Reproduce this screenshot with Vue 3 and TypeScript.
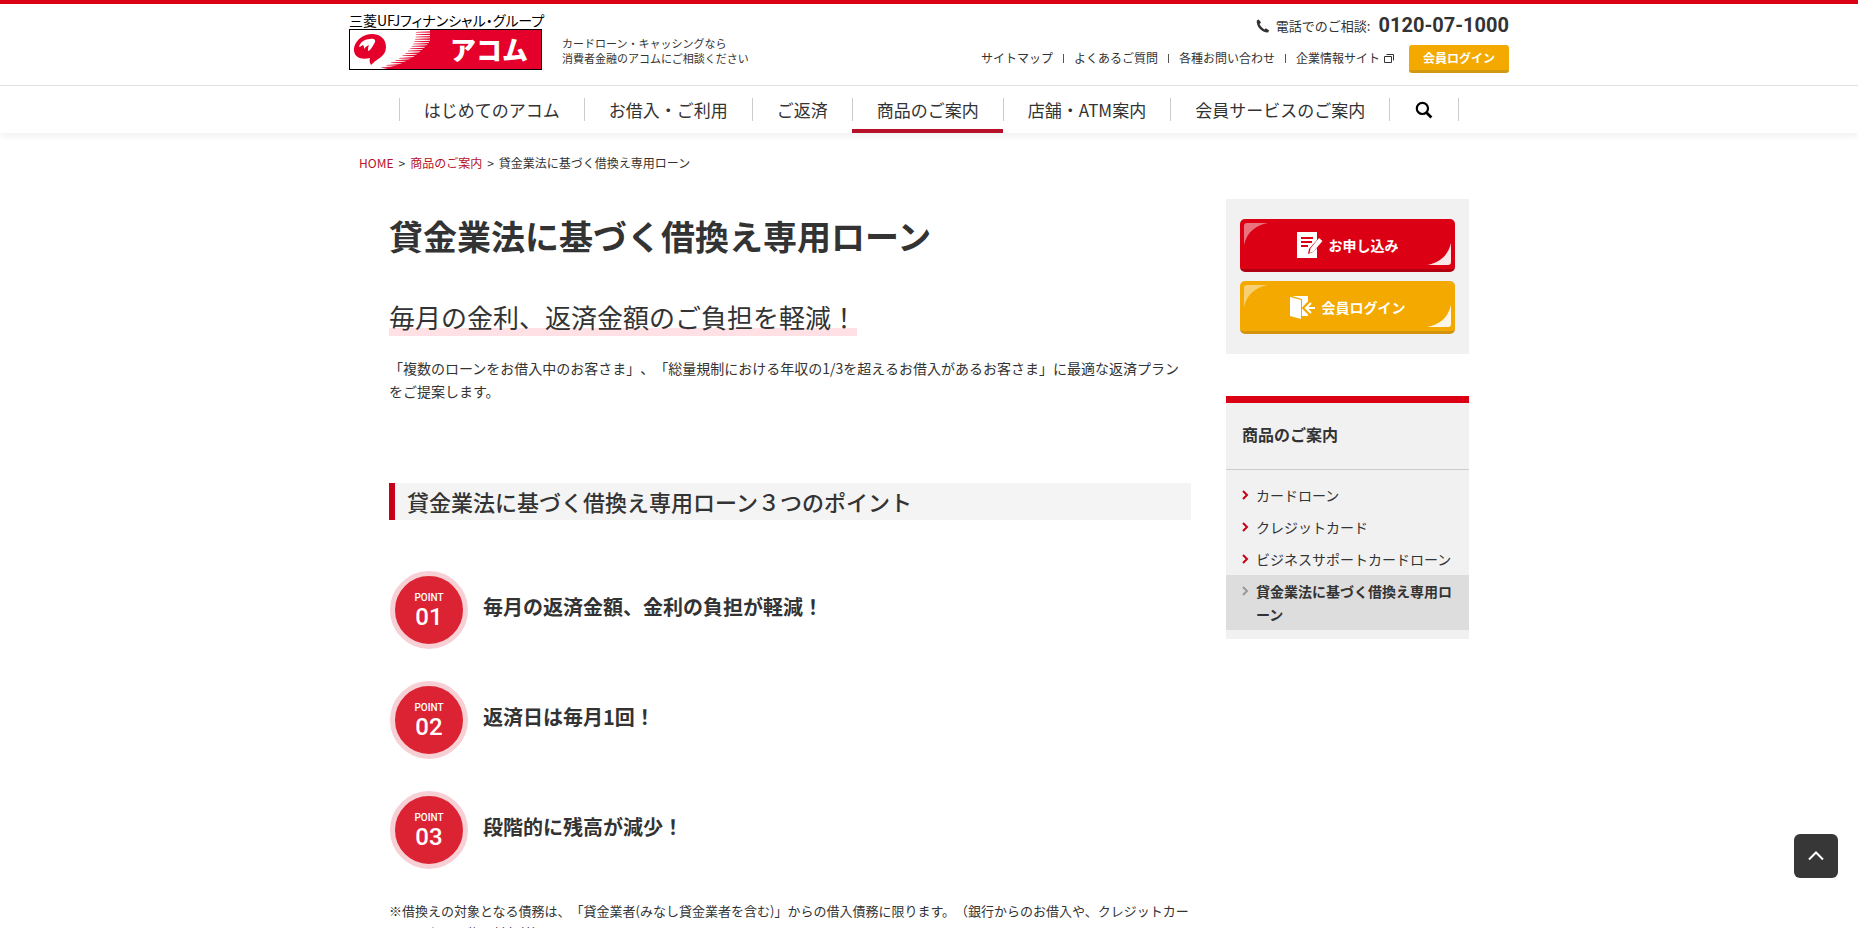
<script setup lang="ts">
interface NavItem {
  label: string
  active?: boolean
}

const utilityLinks: string[] = ['サイトマップ', 'よくあるご質問', '各種お問い合わせ']

const navItems: NavItem[] = [
  { label: 'はじめてのアコム' },
  { label: 'お借入・ご利用' },
  { label: 'ご返済' },
  { label: '商品のご案内', active: true },
  { label: '店舗・ATM案内' },
  { label: '会員サービスのご案内' },
]

const points: string[] = [
  '毎月の返済金額、金利の負担が軽減！',
  '返済日は毎月1回！',
  '段階的に残高が減少！',
]

const sideLinks: NavItem[] = [
  { label: 'カードローン' },
  { label: 'クレジットカード' },
  { label: 'ビジネスサポートカードローン' },
  { label: '貸金業法に基づく借換え専用ローン', active: true },
]

// Tapered stripes along the curved edge of the logo's red field.
const stripes: string[] = Array.from({ length: 17 }, (_, i) => {
  const y = 1 + i * 2.35
  const t = y / 40
  const left = 66 - 44 * Math.pow(t, 2.4)
  const right = 88 - 50 * Math.pow(t, 1.9)
  return `M${left.toFixed(1)} ${(y + 1).toFixed(1)}L${right.toFixed(1)} ${y.toFixed(1)}V${(y + 1.8).toFixed(1)}L${left.toFixed(1)} ${(y + 1.5).toFixed(1)}Z`
})
</script>

<template>
  <div class="page">
    <header class="header">
      <div class="header-top">
        <div class="brand">
          <a class="logo" href="#">
            <span class="logo-group">三菱UFJフィナンシャル・グループ</span>
            <span class="logo-box">
              <svg class="logo-mark" viewBox="0 0 90 39" aria-hidden="true">
                <path fill="#e4002b" d="M4 21C3 15 9 7 16 5C25 2 36 6 36 17C36 27 26 29 21 35C20 33 19 31 20 28C12 30 5 28 4 21Z" />
                <path fill="#fff" d="M9 17C10 12 15 9 20 9C24 8 27 10 24 14C22 17 21 20 18 21C18 19 18 17 19 15C16 16 15 18 14 19C14 17 14 16 13 15C11 16 10 17 9 17Z" />
                <path fill="#e4002b" d="M86 0H90V39H33C55 35 78 21 86 0Z" />
                <path v-for="(d, i) in stripes" :key="i" fill="#e4002b" :d="d" />
              </svg>
              <span class="logo-name">アコム</span>
            </span>
          </a>
          <p class="tagline">カードローン・キャッシングなら<br />消費者金融のアコムにご相談ください</p>
        </div>

        <div class="contact">
          <p class="phone">
            <svg class="phone-icon" viewBox="0 0 14 14" aria-hidden="true">
              <path fill="#333" d="M0.800 1.400L2.800 0.400L5 3.600L3.600 4.900C4.600 7.200 6.200 9 8.400 10.400L9.900 9.300L13.200 11.600L12 13.400C6 13.600 0 7.400 0.800 1.400Z" />
            </svg>
            <span class="phone-label">電話でのご相談:</span>
            <span class="phone-number">0120-07-1000</span>
          </p>
          <div class="utility">
            <ul class="utility-list">
              <li v-for="link in utilityLinks" :key="link"><a href="#">{{ link }}</a></li>
              <li>
                <a href="#">企業情報サイト
                  <svg class="window-icon" viewBox="0 0 10 9" aria-hidden="true">
                    <path fill="none" stroke="#333" d="M0.5 2.5H7.5V8.5H0.5ZM2.5 0.5H9.5V6.5" />
                  </svg>
                </a>
              </li>
            </ul>
            <a class="login-small" href="#">会員ログイン</a>
          </div>
        </div>
      </div>

      <nav class="nav">
        <ul class="nav-list">
          <li v-for="item in navItems" :key="item.label" :class="{ active: item.active }">
            <a href="#">{{ item.label }}</a>
          </li>
          <li>
            <button class="search" type="button" aria-label="検索">
              <svg viewBox="0 0 18 18" aria-hidden="true">
                <circle cx="7.4" cy="7.4" r="5.6" fill="none" stroke="#000" stroke-width="2.2" />
                <path d="M11.4 11.4L16.4 16.4" stroke="#000" stroke-width="2.8" />
              </svg>
            </button>
          </li>
        </ul>
      </nav>
    </header>

    <div class="breadcrumb">
      <a href="#">HOME</a><span class="divider">&gt;</span><a href="#">商品のご案内</a><span class="divider">&gt;</span><span>貸金業法に基づく借換え専用ローン</span>
    </div>

    <div class="content">
      <main class="main">
        <h1>貸金業法に基づく借換え専用ローン</h1>
        <p class="lead"><span>毎月の金利、返済金額のご負担を軽減！</span></p>
        <p class="intro">「複数のローンをお借入中のお客さま」、「総量規制における年収の1/3を超えるお借入があるお客さま」に最適な返済プランをご提案します。</p>
        <h2>貸金業法に基づく借換え専用ローン３つのポイント</h2>
        <ol class="points">
          <li v-for="(point, i) in points" :key="point">
            <span class="badge">
              <span class="badge-label">POINT</span>
              <span class="badge-number">0{{ i + 1 }}</span>
            </span>
            <h3>{{ point }}</h3>
          </li>
        </ol>
        <p class="note">※借換えの対象となる債務は、「貸金業者(みなし貸金業者を含む)」からの借入債務に限ります。（銀行からのお借入や、クレジットカードでのお買い物は対象外）</p>
      </main>

      <aside class="side">
        <div class="actions">
          <a class="action apply" href="#">
            <svg class="corner corner-tl" viewBox="0 0 24 22" aria-hidden="true"><path d="M3 0H24C12 2 3 9 0 22V3Q0 0 3 0Z" /></svg>
            <svg class="action-icon" viewBox="0 0 26 26" aria-hidden="true">
              <path fill="#fff" d="M0 0H20V8L12 17L11 22L16 20L20 16V26H0Z" />
              <path stroke="#dc0014" stroke-width="2" d="M4 6H16M4 10H15M4 14H11" />
              <path fill="#fff" d="M22 6L25.500 9L16.500 19.500L12.500 21L13.500 16.500Z" />
            </svg>
            <span>お申し込み</span>
            <svg class="corner corner-br" viewBox="0 0 24 22" aria-hidden="true"><path d="M24 0V19Q24 22 21 22H0C12 20 21 13 24 0Z" /></svg>
          </a>
          <a class="action login" href="#">
            <svg class="corner corner-tl" viewBox="0 0 24 22" aria-hidden="true"><path d="M3 0H24C12 2 3 9 0 22V3Q0 0 3 0Z" /></svg>
            <svg class="action-icon" viewBox="0 0 26 26" aria-hidden="true">
              <path fill="#fff" d="M0 3L11 6V25L0 22Z" />
              <path fill="#fff" d="M2 2H18V22H12V5Z" />
              <path fill="none" stroke="#f3a900" stroke-width="5" d="M26 14H16M21 8L15 14L21 20" />
              <path fill="none" stroke="#fff" stroke-width="2" d="M25 14H16M21 9L16 14L21 19" />
            </svg>
            <span>会員ログイン</span>
            <svg class="corner corner-br" viewBox="0 0 24 22" aria-hidden="true"><path d="M24 0V19Q24 22 21 22H0C12 20 21 13 24 0Z" /></svg>
          </a>
        </div>

        <nav class="side-nav">
          <p class="side-title">商品のご案内</p>
          <ul>
            <li v-for="item in sideLinks" :key="item.label" :class="{ active: item.active }">
              <a href="#">
                <svg class="chevron" viewBox="0 0 7 10" aria-hidden="true"><path d="M1 1L5 5L1 9" /></svg>
                <span>{{ item.label }}</span>
              </a>
            </li>
          </ul>
        </nav>
      </aside>
    </div>

    <button class="to-top" type="button" aria-label="ページの先頭へ">
      <svg viewBox="0 0 18 10" aria-hidden="true"><path d="M2 8.500L9 1.500L16 8.500" /></svg>
    </button>
  </div>
</template>

<style>
body {
  margin: 0;
  background: #fff;
}
</style>

<style scoped>
.page {
  height: 100vh;
  overflow: hidden;
  color: #333;
  font-family: "Noto Sans CJK JP", "Noto Sans", sans-serif;
  font-size: 14px;
  line-height: 23px;
  text-spacing-trim: space-all;
}

.page * {
  box-sizing: border-box;
}

p, h1, h2, h3, ul, ol {
  margin: 0;
  padding: 0;
}

ul, ol {
  list-style: none;
}

a {
  color: inherit;
  text-decoration: none;
}

button {
  padding: 0;
  border: 0;
  background: none;
  cursor: pointer;
}

svg {
  display: block;
}

.header {
  border-top: 4px solid #dc0014;
  box-shadow: 0 4px 6px rgba(0, 0, 0, 0.05);
}

.header-top {
  display: flex;
  justify-content: space-between;
  max-width: 1160px;
  height: 81px;
  margin: 0 auto;
}

.brand {
  display: flex;
  gap: 20px;
}

.logo {
  display: block;
  width: 193px;
  padding-top: 8px;
  color: #000;
}

.logo-group {
  display: block;
  font-size: 14px;
  font-feature-settings: "palt";
  line-height: 17px;
  white-space: nowrap;
}

.logo-box {
  display: flex;
  height: 41px;
  border: 1px solid #000;
  background: linear-gradient(90deg, #fff 80px, #e4002b 80px);
}

.logo-mark {
  width: 90px;
  height: 39px;
}

.logo-name {
  flex: 1;
  padding-left: 10px;
  color: #fff;
  font-size: 26px;
  font-weight: 900;
  line-height: 38px;
  white-space: nowrap;
}

.tagline {
  padding-top: 32px;
  font-size: 11px;
  line-height: 15px;
}

.contact {
  display: flex;
  flex-direction: column;
  align-items: flex-end;
  padding-top: 9px;
}

.phone {
  display: flex;
  align-items: center;
  height: 24px;
}

.phone-icon {
  width: 14px;
  height: 14px;
  margin: 2px 6px 0 0;
}

.phone-label {
  margin-right: 8px;
  font-size: 13px;
}

.phone-number {
  font-family: Roboto, sans-serif;
  font-size: 20px;
  font-weight: 700;
}

.utility {
  display: flex;
  gap: 15px;
  margin-top: 8px;
}

.utility-list {
  display: flex;
  align-items: center;
  padding-bottom: 2px;
  font-size: 12px;
  line-height: 12px;
}

.utility-list li + li {
  display: flex;
  align-items: center;
}

.utility-list li + li::before {
  width: 1px;
  height: 9px;
  margin: 0 10px;
  background: #555;
  content: "";
}

.utility-list a {
  display: flex;
  gap: 4px;
  align-items: center;
}

.window-icon {
  width: 10px;
  height: 9px;
}

.login-small {
  width: 100px;
  border-bottom: 3px solid #d29a12;
  border-radius: 3px;
  background: #f3a900;
  color: #fff;
  font-size: 12px;
  font-weight: 700;
  line-height: 25px;
  text-align: center;
}

.nav {
  border-top: 1px solid #e0e0e0;
}

.nav-list {
  display: flex;
  justify-content: center;
}

.nav-list li {
  height: 47px;
  padding: 12px 0 0;
}

.nav-list li a,
.search {
  display: block;
  height: 23px;
  padding: 0 24px;
  border-left: 1px solid #ccc;
  font-size: 17px;
  line-height: 23px;
  white-space: nowrap;
}

.nav-list .search {
  padding: 0 25px;
  border-right: 1px solid #ccc;
}

.nav-list .active {
  border-bottom: 4px solid #b5122a;
}

.search svg {
  width: 18px;
  height: 18px;
}

.breadcrumb {
  max-width: 1140px;
  margin: 18px auto 0;
  font-size: 12px;
}

.breadcrumb a {
  color: #b5122a;
}

.divider {
  margin: 0 5px;
}

.content {
  display: flex;
  align-items: flex-start;
  justify-content: space-between;
  max-width: 1080px;
  margin: 25px auto 0;
}

.main {
  width: 802px;
}

h1 {
  padding-top: 12px;
  font-size: 34px;
  font-weight: 700;
  line-height: 50px;
}

.lead {
  margin-top: 37px;
  font-size: 26px;
  line-height: 38px;
}

.lead span {
  display: inline-block;
  background: linear-gradient(transparent 30px, #ffe1e5 30px);
}

.intro {
  margin-top: 21px;
}

h2 {
  margin-top: 80px;
  padding-left: 12px;
  border-left: 6px solid #c7001a;
  background: #f4f4f4;
  font-size: 22px;
  font-weight: 500;
  line-height: 37px;
}

.points {
  display: flex;
  flex-direction: column;
  gap: 32px;
  margin-top: 51px;
  padding-left: 1px;
}

.points li {
  display: flex;
  gap: 15px;
  align-items: center;
}

.badge {
  display: flex;
  flex-direction: column;
  align-items: center;
  width: 78px;
  height: 78px;
  padding-top: 16px;
  border: 5px solid #f7d0d5;
  border-radius: 50%;
  background: #dc2333;
  color: #fff;
  font-family: Roboto, sans-serif;
  font-weight: 500;
}

.badge-label {
  font-size: 10px;
  line-height: 12px;
}

.badge-number {
  font-size: 24px;
  line-height: 26px;
}

h3 {
  padding-bottom: 6px;
  font-size: 20px;
  font-weight: 700;
  line-height: 28px;
}

.note {
  margin-top: 31px;
  font-size: 13px;
  line-height: 22px;
}

.side {
  display: flex;
  flex-direction: column;
  gap: 42px;
  width: 243px;
}

.actions {
  display: flex;
  flex-direction: column;
  gap: 9px;
  padding: 20px 14px;
  background: #f1f1f1;
}

.action {
  position: relative;
  display: flex;
  gap: 6px;
  align-items: center;
  justify-content: center;
  height: 53px;
  padding-top: 2px;
  border-bottom: 3px solid #b00012;
  border-radius: 5px;
  background: #dc0014;
  color: #fff;
  font-weight: 700;
}

.login {
  border-color: #d3930c;
  background: #f3a900;
}

.action-icon {
  width: 26px;
  height: 26px;
}

.corner {
  position: absolute;
  width: 24px;
  height: 22px;
  fill: #fff;
}

.corner-tl {
  top: 4px;
  left: 4px;
  opacity: 0.45;
}

.corner-br {
  right: 4px;
  bottom: 4px;
  opacity: 0.9;
}

.side-nav {
  padding-bottom: 9px;
  border-top: 7px solid #dc0014;
  background: #f1f1f1;
}

.side-title {
  padding: 20px 16px 23px;
  border-bottom: 1px solid #ccc;
  font-size: 16px;
  font-weight: 700;
}

.side-nav ul {
  padding-top: 9px;
}

.side-nav li a {
  display: flex;
  gap: 7px;
  align-items: flex-start;
  padding: 5px 14px 4px 16px;
}

.side-nav .active {
  background: #ddd;
  font-weight: 700;
}

.chevron {
  flex: none;
  width: 7px;
  height: 10px;
  margin-top: 6px;
  fill: none;
  stroke: #c7001a;
  stroke-width: 2;
}

.active .chevron {
  stroke: #999;
}

.to-top {
  position: fixed;
  right: 20px;
  bottom: 50px;
  display: flex;
  align-items: center;
  justify-content: center;
  width: 44px;
  height: 44px;
  border-radius: 6px;
  background: #373737;
}

.to-top svg {
  width: 18px;
  height: 10px;
  fill: none;
  stroke: #fff;
  stroke-width: 2;
}
</style>
